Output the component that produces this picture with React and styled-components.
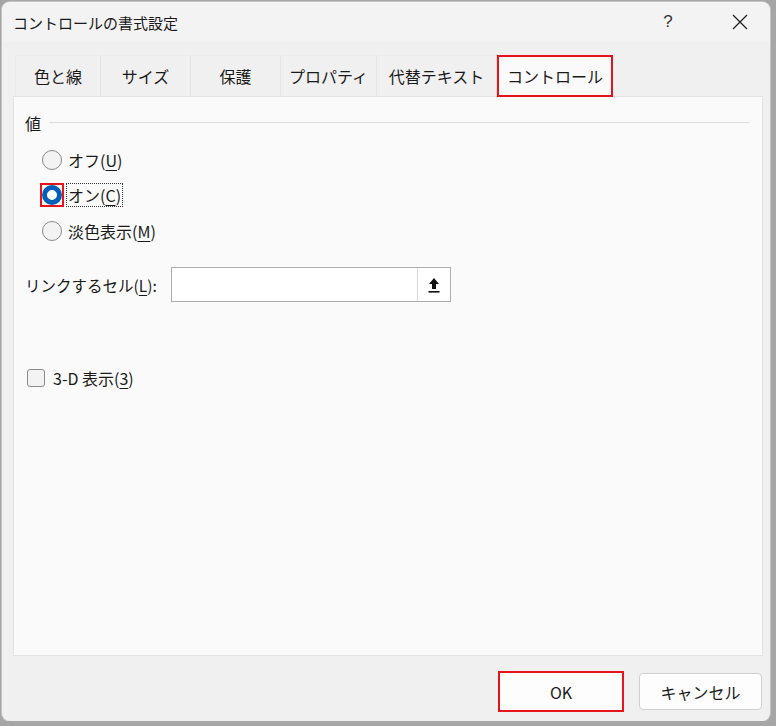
import React from "react";
import styled, { createGlobalStyle } from "styled-components";

const Global = createGlobalStyle`
  html, body { margin: 0; padding: 0; }
  body {
    background: #a6a6a6;
    font-family: "Noto Sans CJK JP", "Noto Sans", sans-serif;
    color: #1a1a1a;
  }
`;

const Window = styled.div`
  margin: 2px 0 0 2px;
  width: 768px;
  height: 719px;
  background: #f0f0f0;
  border-radius: 8px;
  box-shadow: 0 0 0 1px #c4c4c4;
  display: flex;
  flex-direction: column;
  overflow: hidden;
`;

const TitleBar = styled.div`
  height: 40px;
  display: flex;
  align-items: center;
  padding-left: 11px;
  background: #f3f3f3;
`;

const Title = styled.div`
  flex: 1;
  font-size: 15px;
  color: #1a1a1a;
`;

const TitleBtn = styled.div`
  width: 36px;
  display: flex;
  align-items: center;
  justify-content: center;
  font-size: 17px;
  color: #333;
  font-family: "Liberation Sans", sans-serif;
`;

const CloseBtn = styled(TitleBtn)`
  margin-left: 36px;
  margin-right: 12px;
`;

const Tabs = styled.div`
  margin-top: 13px;
  padding-left: 13px;
  display: flex;
  height: 41px;
`;

const Tab = styled.div`
  width: ${(p) => p.$w}px;
  box-sizing: border-box;
  display: flex;
  align-items: center;
  justify-content: center;
  font-size: 16px;
  border-right: 1px solid #e3e3e3;
  border-top: 1px solid #ececec;
  background: ${(p) => (p.$active ? "#fafafa" : "#f0f0f0")};
  ${(p) =>
    p.$active &&
    `
    border: 2px solid #e8141c;
    position: relative;
    z-index: 2;
    height: 42px;
  `}
  &:first-child { border-left: 1px solid #ececec; }
`;

const Panel = styled.div`
  margin: 0 7px 0 11px;
  height: 560px;
  background: #fafafa;
  border: 1px solid #e2e2e2;
  box-sizing: border-box;
  padding: 15px 13px 0 11px;
  position: relative;
  z-index: 1;
`;

const GroupHead = styled.div`
  display: flex;
  align-items: center;
  gap: 8px;
  font-size: 16px;
  height: 22px;
  &::after {
    content: "";
    flex: 1;
    height: 1px;
    background: #dcdcdc;
    margin-top: -2px;
  }
`;

const RadioList = styled.div`
  display: flex;
  flex-direction: column;
  gap: 12.5px;
  padding: 14px 0 0 17px;
`;

const RadioRow = styled.div`
  display: flex;
  align-items: center;
  gap: 2px;
  height: 23px;
  font-size: 16px;
`;

const RadioWrap = styled.div`
  width: 24px;
  height: 24px;
  box-sizing: border-box;
  display: flex;
  align-items: center;
  justify-content: center;
  border: ${(p) => (p.$marked ? "2px solid #e8141c" : "2px solid transparent")};
  margin-left: -2px;
`;

const Radio = styled.div`
  width: 20px;
  height: 20px;
  box-sizing: border-box;
  border-radius: 50%;
  border: ${(p) => (p.$on ? "5.5px solid #005fb8" : "1px solid #8a8a8a")};
  background: ${(p) => (p.$on ? "#ffffff" : "#f3f3f3")};
`;

const Label = styled.span`
  padding: 0 1px;
  border: 1px ${(p) => (p.$focus ? "dotted #333" : "solid transparent")};
  line-height: 22px;
`;

const U = styled.span`
  text-decoration: underline;
  text-underline-offset: 3px;
`;

const LinkRow = styled.div`
  display: flex;
  align-items: center;
  margin-top: 25px;
  font-size: 16px;
`;

const LinkLabel = styled.span`
  width: 146px;
  font-size: 15.5px;
  white-space: nowrap;
`;

const InputBox = styled.div`
  width: 280px;
  height: 35px;
  box-sizing: border-box;
  border: 1px solid #adadad;
  background: #fff;
  display: flex;
  justify-content: flex-end;
`;

const PickBtn = styled.div`
  width: 32px;
  border-left: 1px solid #d8d8d8;
  display: flex;
  align-items: center;
  justify-content: center;
`;

const CheckRow = styled.div`
  display: flex;
  align-items: center;
  gap: 8px;
  margin-top: 64px;
  padding-left: 2px;
  font-size: 16px;
`;

const Checkbox = styled.div`
  width: 18px;
  height: 18px;
  box-sizing: border-box;
  border: 1px solid #8a8a8a;
  border-radius: 3px;
  background: #f3f3f3;
`;

const Footer = styled.div`
  flex: 1;
  display: flex;
  justify-content: flex-end;
  align-items: center;
  gap: 15px;
  padding: 6px 8px 0 0;
`;

const Button = styled.div`
  width: ${(p) => p.$w}px;
  height: ${(p) => (p.$marked ? 41 : 37)}px;
  box-sizing: border-box;
  background: #fdfdfd;
  border: ${(p) => (p.$marked ? "2px solid #e8141c" : "1px solid #d0d0d0")};
  border-radius: ${(p) => (p.$marked ? 0 : 4)}px;
  display: flex;
  align-items: center;
  justify-content: center;
  font-size: 16px;
`;

export default function App() {
  return (
    <>
      <Global />
      <Window>
        <TitleBar>
          <Title>コントロールの書式設定</Title>
          <TitleBtn>?</TitleBtn>
          <CloseBtn>
            <svg width="16" height="16" viewBox="0 0 16 16">
              <path d="M1 1L15 15M15 1L1 15" stroke="#222" strokeWidth="1.3" fill="none" />
            </svg>
          </CloseBtn>
        </TitleBar>
        <Tabs>
          <Tab $w={86}>色と線</Tab>
          <Tab $w={90}>サイズ</Tab>
          <Tab $w={90}>保護</Tab>
          <Tab $w={96}>プロパティ</Tab>
          <Tab $w={120}>代替テキスト</Tab>
          <Tab $w={116} $active>コントロール</Tab>
        </Tabs>
        <Panel>
          <GroupHead>値</GroupHead>
          <RadioList>
            <RadioRow>
              <RadioWrap><Radio /></RadioWrap>
              <Label>オフ(<U>U</U>)</Label>
            </RadioRow>
            <RadioRow>
              <RadioWrap $marked><Radio $on /></RadioWrap>
              <Label $focus>オン(<U>C</U>)</Label>
            </RadioRow>
            <RadioRow>
              <RadioWrap><Radio /></RadioWrap>
              <Label>淡色表示(<U>M</U>)</Label>
            </RadioRow>
          </RadioList>
          <LinkRow>
            <LinkLabel>リンクするセル(<U>L</U>):</LinkLabel>
            <InputBox>
              <PickBtn>
                <svg width="14" height="18" viewBox="0 0 14 18">
                  <path d="M7 2L2 8H5V13H9V8H12Z" fill="#111" />
                  <rect x="1.5" y="15" width="11" height="1.6" fill="#111" />
                </svg>
              </PickBtn>
            </InputBox>
          </LinkRow>
          <CheckRow>
            <Checkbox />
            <span>3-D 表示(<U>3</U>)</span>
          </CheckRow>
        </Panel>
        <Footer>
          <Button $w={126} $marked>OK</Button>
          <Button $w={123}>キャンセル</Button>
        </Footer>
      </Window>
    </>
  );
}
